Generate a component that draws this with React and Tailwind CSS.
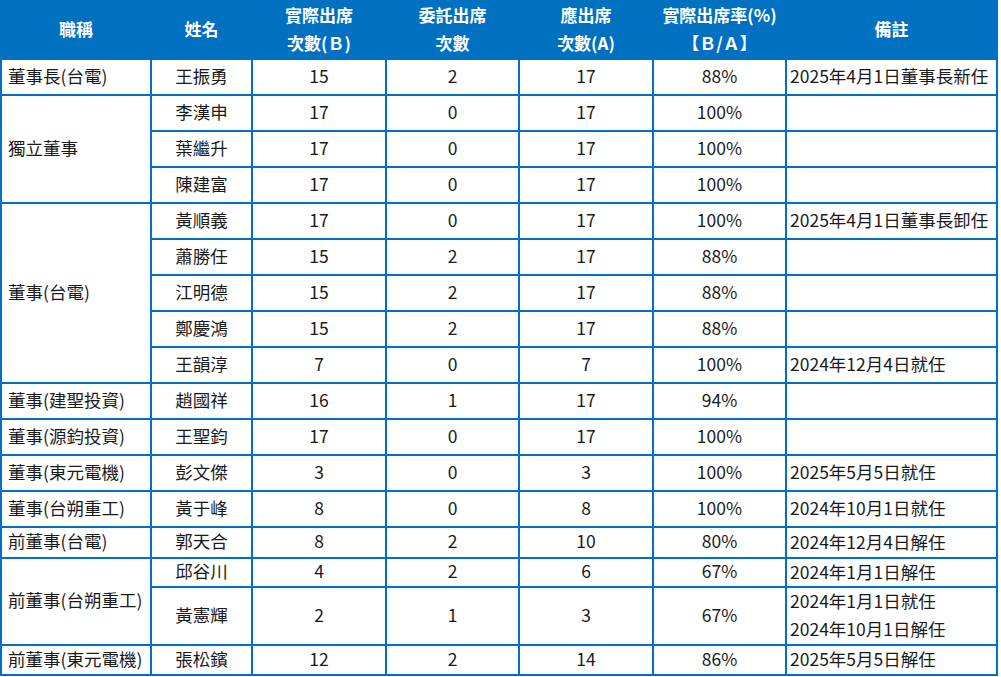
import React from "react";

const groups = [
  { title: "董事長(台電)", rows: [["王振勇", "15", "2", "17", "88%", ["2025年4月1日董事長新任"]]] },
  {
    title: "獨立董事",
    rows: [
      ["李漢申", "17", "0", "17", "100%", []],
      ["葉繼升", "17", "0", "17", "100%", []],
      ["陳建富", "17", "0", "17", "100%", []],
    ],
  },
  {
    title: "董事(台電)",
    rows: [
      ["黃順義", "17", "0", "17", "100%", ["2025年4月1日董事長卸任"]],
      ["蕭勝任", "15", "2", "17", "88%", []],
      ["江明德", "15", "2", "17", "88%", []],
      ["鄭慶鴻", "15", "2", "17", "88%", []],
      ["王韻淳", "7", "0", "7", "100%", ["2024年12月4日就任"]],
    ],
  },
  { title: "董事(建聖投資)", rows: [["趙國祥", "16", "1", "17", "94%", []]] },
  { title: "董事(源鈞投資)", rows: [["王聖鈞", "17", "0", "17", "100%", []]] },
  { title: "董事(東元電機)", rows: [["彭文傑", "3", "0", "3", "100%", ["2025年5月5日就任"]]] },
  { title: "董事(台朔重工)", rows: [["黃于峰", "8", "0", "8", "100%", ["2024年10月1日就任"]]] },
  { title: "前董事(台電)", rows: [["郭天合", "8", "2", "10", "80%", ["2024年12月4日解任"]]] },
  {
    title: "前董事(台朔重工)",
    rows: [
      ["邱谷川", "4", "2", "6", "67%", ["2024年1月1日解任"]],
      ["黃憲輝", "2", "1", "3", "67%", ["2024年1月1日就任", "2024年10月1日解任"]],
    ],
  },
  { title: "前董事(東元電機)", rows: [["張松鑌", "12", "2", "14", "86%", ["2025年5月5日解任"]]] },
];

const spanClass = { 1: "", 2: "row-span-2", 3: "row-span-3", 5: "row-span-5" };

function Head({ children }) {
  return (
    <div className="bg-[#0070c0] text-white font-bold text-[17px] leading-[28px] flex flex-col items-center justify-center text-center">
      {children}
    </div>
  );
}

export default function App() {
  return (
    <div className="w-[1001px] h-[677px] bg-white" style={{ fontFamily: '"Noto Sans CJK TC", "Noto Sans", sans-serif' }}>
      <div className="inline-grid grid-cols-[148px_99px_132px_131px_132px_131px_209px] grid-rows-[58px_34px_34px_34px_34px_34px_34px_34px_34px_34px_34px_34px_34px_34px_29px_27px_56px_28px] gap-[2px] px-[2px] pb-[2px] bg-[#0070c0] text-[#1a1a1a] text-[17.5px]">
        <Head>職稱</Head>
        <Head>姓名</Head>
        <Head>
          <span>實際出席</span>
          <span>次數(Ｂ)</span>
        </Head>
        <Head>
          <span>委託出席</span>
          <span>次數</span>
        </Head>
        <Head>
          <span>應出席</span>
          <span>次數(A)</span>
        </Head>
        <Head>
          <span>實際出席率(%)</span>
          <span>【Ｂ/Ａ】</span>
        </Head>
        <Head>備註</Head>

        {groups.map((g) =>
          g.rows.map((r, i) => (
            <React.Fragment key={r[0]}>
              {i === 0 && (
                <div className={`bg-white flex items-center pl-[6px] pb-[2px] whitespace-nowrap ${spanClass[g.rows.length]}`}>
                  {g.title}
                </div>
              )}
              <div className="bg-white flex items-center justify-center pb-[2px]">{r[0]}</div>
              <div className="bg-white flex items-center justify-center pb-[2px]">{r[1]}</div>
              <div className="bg-white flex items-center justify-center pb-[2px]">{r[2]}</div>
              <div className="bg-white flex items-center justify-center pb-[2px]">{r[3]}</div>
              <div className="bg-white flex items-center justify-center pb-[2px]">{r[4]}</div>
              <div className="bg-white flex flex-col justify-center pl-[3px] pb-[2px] leading-[28px] whitespace-nowrap">
                {r[5].map((t) => (
                  <span key={t}>{t}</span>
                ))}
              </div>
            </React.Fragment>
          ))
        )}
      </div>
    </div>
  );
}
